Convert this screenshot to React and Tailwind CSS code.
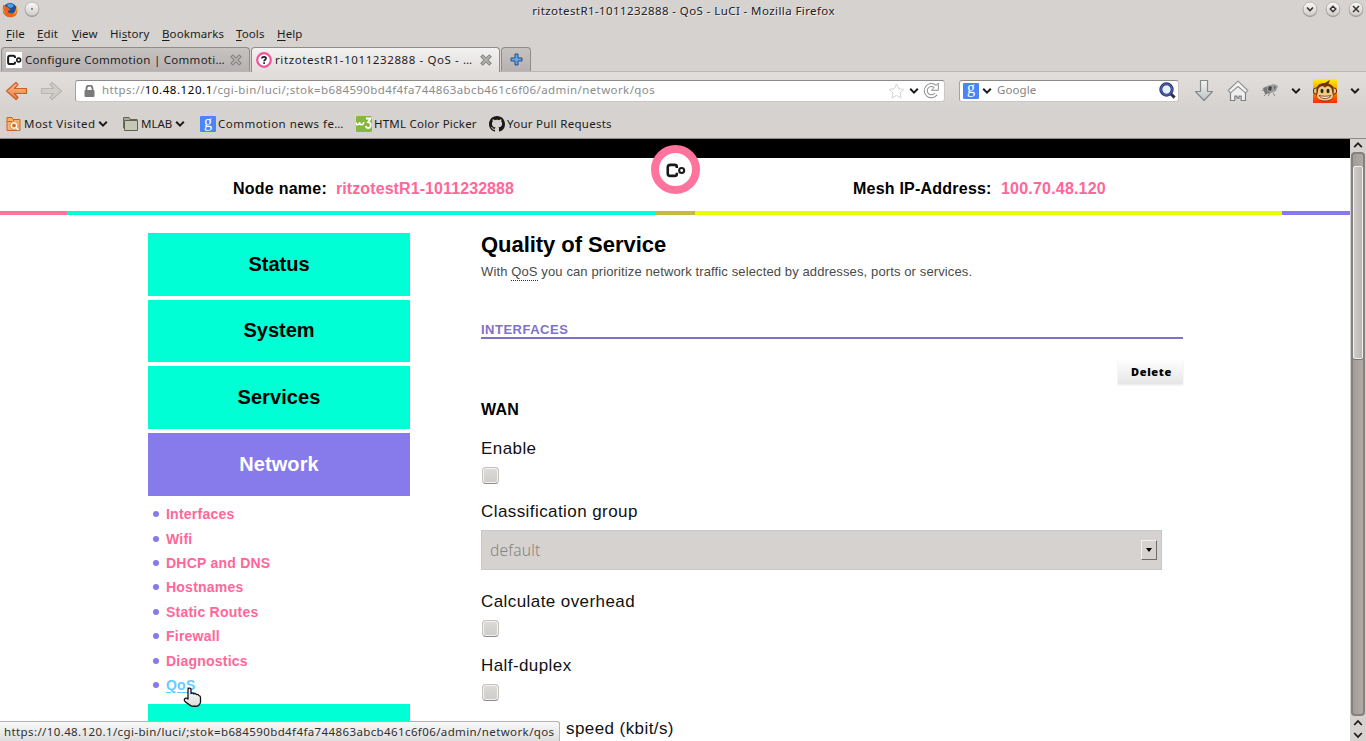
import React from "react";

const UI = "font-['Noto_Sans','Open_Sans',sans-serif]";
const HELV = "font-['Liberation_Sans',Arial,sans-serif]";

function Chevron({ className = "" }) {
  return (
    <svg className={"shrink-0 " + className} width="10" height="8" viewBox="0 0 10 8" fill="none">
      <path d="M1.2 1.8 5 5.6 8.8 1.8" stroke="#1b1b1b" strokeWidth="2" />
    </svg>
  );
}

function GoogleIcon({ className = "" }) {
  return (
    <span className={"flex h-4 w-4 shrink-0 items-center justify-center rounded-[1px] bg-[#4a84f5] " + className}>
      <span className="-mt-[5px] font-['Liberation_Serif',serif] text-[16px] leading-[18px] text-white">g</span>
    </span>
  );
}

function CommotionMark({ size, className = "" }) {
  return (
    <svg className={"shrink-0 " + className} width={size} height={size} viewBox="0 0 16 16" fill="none">
      <path d="M9 6V5.200C9 4 8.500 3.700 7.300 3.700H4C2.600 3.700 2.100 4.200 2.100 5.600v4.600c0 1.400.5 1.900 1.900 1.900h3.300c1.200 0 1.700-.3 1.700-1.500V9.800" stroke="#1a1a1a" strokeWidth="2" />
      <circle cx="12.700" cy="8" r="1.900" stroke="#1a1a1a" strokeWidth="1.600" />
    </svg>
  );
}

function WindowButton({ children }) {
  return (
    <svg className="shrink-0" width="16" height="17" viewBox="0 0 16 17" fill="none">
      <circle cx="8" cy="8.8" r="7.2" fill="#9c9894" />
      <circle cx="8" cy="8" r="6.9" fill="url(#btn)" stroke="#a9a5a1" strokeWidth=".7" />
      {children}
    </svg>
  );
}

function TitleBar() {
  return (
    <div className="flex h-[22px] shrink-0 items-center">
      <svg className="ml-[2px] mt-[-2px] shrink-0" width="16" height="16" viewBox="0 0 16 16">
        <circle cx="8" cy="8" r="7" fill="#1f4f9a" />
        <path d="M5 2.5C8 1 11 2 12 4L9 6 6 5Z" fill="#4aa3dd" />
        <path d="M1.5 2.5C.3 6 .5 10.500 3 13c3 3 8 3 10.600.5C16 11 16 6.500 14 3.500c.3 2-.1 3-.5 4C13 11 9.500 12 7.500 11 6 10.500 5.500 9 6.500 8.500l2-.5C8 6.500 6.500 6.500 5.500 5 4.500 4.500 3 4.500 1.500 2.500Z" fill="#e8661b" />
        <path d="M14 3.500c1.500 4 .5 8-2.500 9.500 2-2 3-5 2.500-9.500Z" fill="#ffd23e" />
        <path d="M1.500 5c0 3 1 5.500 3 7C1.500 11 .5 8 1.500 5Z" fill="#f8a028" />
      </svg>
      <div className="ml-[6px] mt-[-3px]">
        <WindowButton><circle cx="8" cy="8" r=".9" fill="#666" /></WindowButton>
      </div>
      <div className="flex-1" />
      <span className="mr-[467px] whitespace-nowrap text-[11.5px] tracking-[0.41px] text-[#1d2025] [text-shadow:1px_1px_0_#eee]">
        ritzotestR1-1011232888 - QoS - LuCI - Mozilla Firefox
      </span>
      <div className="mr-[2px] mt-[-3px] flex gap-[7px]">
        <WindowButton><path d="M5 6.500 8 9.500 11 6.500" stroke="#333" strokeWidth="1.600" /></WindowButton>
        <WindowButton><path d="M8 5.200 10.800 8 8 10.800 5.200 8Z" stroke="#333" strokeWidth="1.400" /></WindowButton>
        <WindowButton><path d="m5 5 6 6m0-6-6 6" stroke="#333" strokeWidth="1.500" /></WindowButton>
      </div>
    </div>
  );
}

const menus = [
  ["", "F", "ile", "w-[31px]"],
  ["", "E", "dit", "w-[35px]"],
  ["", "V", "iew", "w-[38px]"],
  ["Hi", "s", "tory", "w-[52px]"],
  ["", "B", "ookmarks", "w-[74px]"],
  ["", "T", "ools", "w-[41px]"],
  ["", "H", "elp", "w-[40px]"],
];

function MenuBar() {
  return (
    <div className="flex h-[24px] shrink-0 items-center pl-[6px] text-[11.5px] tracking-[0.1px] text-[#1c1c1c]">
      {menus.map(([a, b, c, w]) => (
        <span key={b + c} className={"shrink-0 whitespace-nowrap " + w}>
          {a}<span className="underline underline-offset-2">{b}</span>{c}
        </span>
      ))}
    </div>
  );
}

function CloseX() {
  return (
    <svg className="shrink-0" width="12" height="12" viewBox="0 0 12 12" fill="none">
      <path d="m1.500 1.500 9 9m0-9-9 9" stroke="#83817d" strokeWidth="3.800" />
      <path d="m2.200 2.200 7.600 7.600m0-7.600-7.600 7.600" stroke="#b5b3af" strokeWidth="1.700" />
    </svg>
  );
}

function Tabs() {
  return (
    <div className="flex h-[26px] shrink-0 items-end gap-px border-b border-[#bab6b3] pl-px text-[11.5px] text-[#1c1c1c]">
      <div className="flex h-[24px] w-[249px] items-center rounded-t-[4px] border border-b-0 border-[#8f8b89] bg-gradient-to-b from-[#c7c3c1] to-[#b7b2b1] pl-[4px] pr-[7px]">
        <span className="flex h-4 w-4 shrink-0 bg-white"><CommotionMark size={16} /></span>
        <span className="ml-[3px] flex-1 whitespace-nowrap tracking-[0.28px]">Configure Commotion | Commoti…</span>
        <CloseX />
      </div>
      <div className="-mb-px flex h-[25px] w-[249px] items-center rounded-t-[4px] border border-b-0 border-[#8f8b89] bg-gradient-to-b from-[#f3f2f1] to-[#e1dedc] pb-px pl-[4px] pr-[7px]">
        <svg className="shrink-0" width="16" height="16" viewBox="0 0 16 16">
          <circle cx="8" cy="8" r="6.800" fill="#fff" stroke="#f0529c" strokeWidth="2.200" />
          <path d="M6 6.400C6 4.300 10 4.300 10 6.400 10 7.800 8.100 7.700 8.100 9.300M8.100 10.300v1.700" stroke="#222" strokeWidth="1.700" fill="none" />
        </svg>
        <span className="ml-[3px] flex-1 whitespace-nowrap tracking-[0.6px]">ritzotestR1-1011232888 - QoS - …</span>
        <CloseX />
      </div>
      <div className="flex h-[24px] w-[30px] items-center justify-center rounded-t-[4px] border border-b-0 border-[#8f8b89] bg-gradient-to-b from-[#c7c3c1] to-[#b7b2b1]">
        <svg width="13" height="13" viewBox="0 0 13 13">
          <path d="M5 1h3v4h4v3H8v4H5V8H1V5h4Z" fill="#6fa3db" stroke="#1d4f96" strokeWidth="1" strokeLinejoin="round" />
        </svg>
      </div>
    </div>
  );
}

const ARROW = "M11 1.500 1.500 10 11 18.500 13 16.500 9.500 12.500H21.500V7.500H9.500L13 3.500Z";

function NavBar() {
  return (
    <div className="flex h-[37px] shrink-0 items-center bg-gradient-to-b from-[#e1dedc] to-[#d6d2cf] pl-[5px]">
      <svg className="shrink-0" width="24" height="20" viewBox="0 0 24 20">
        <path d={ARROW} fill="url(#orange)" stroke="#cc5f2c" strokeWidth="1.200" strokeLinejoin="round" />
      </svg>
      <svg className="ml-[10px] shrink-0 -scale-x-100" width="24" height="20" viewBox="0 0 24 20">
        <path d={ARROW} fill="#cfccc9" stroke="#b9b6b2" strokeWidth="1.200" strokeLinejoin="round" />
      </svg>
      <div className="ml-[12px] flex h-[22px] w-[870px] shrink-0 items-center rounded-[3px] border border-[#c9c6c3] border-t-[#8d8a88] border-l-[#a5a2a0] bg-white pl-[8px] pr-[4px]">
        <svg className="shrink-0" width="11" height="12" viewBox="0 0 11 12">
          <path d="M2.500 6V3.500a3 3 0 0 1 6 0V6" fill="none" stroke="#7a7a7a" strokeWidth="1.800" />
          <rect x=".5" y="5" width="10" height="7" rx="1" fill="#7a7a7a" />
        </svg>
        <span className="ml-[7px] -mt-px flex-1 whitespace-nowrap text-[11.5px] tracking-[0.4px] text-[#8b8b8b]">
          https://<span className="tracking-[0.55px] text-black">10.48.120.1</span>/cgi-bin/luci/;stok=b684590bd4f4fa744863abcb461c6f06/admin/network/qos
        </span>
        <svg className="shrink-0" width="17" height="16" viewBox="0 0 17 16">
          <path d="m8.500 1 2.200 4.800 5.100.6-3.800 3.500 1 5.100-4.500-2.500L4 15l1-5.100L1.200 6.400l5.100-.6Z" fill="#fff" stroke="#d4d4d4" />
        </svg>
        <Chevron className="ml-[4px]" />
        <svg className="ml-[4px] shrink-0" width="17" height="17" viewBox="0 0 17 17" fill="none">
          <path d="M13 11.800A5.600 5.600 0 1 1 12.300 4.700" stroke="#8d8d8d" strokeWidth="4" />
          <path d="M15.300 1v7.300H8.500Z" fill="#fff" stroke="#8d8d8d" />
          <path d="M13 11.800A5.600 5.600 0 1 1 12.300 4.700L14 6" stroke="#fff" strokeWidth="2" />
        </svg>
      </div>
      <div className="ml-[14px] flex h-[22px] w-[220px] shrink-0 items-center rounded-[3px] border border-[#c9c6c3] border-t-[#8d8a88] border-l-[#a5a2a0] bg-white pl-[3px] pr-[2px]">
        <GoogleIcon />
        <Chevron className="ml-[3px]" />
        <span className="ml-[5px] -mt-px flex-1 text-[11.500px] tracking-[0.1px] text-[#858585]">Google</span>
        <svg width="17" height="17" viewBox="0 0 17 17" fill="none">
          <path d="m12 12 3.600 3.600" stroke="#333" strokeWidth="3" />
          <circle cx="7.500" cy="7.500" r="5.700" fill="#e9effb" stroke="#25357f" strokeWidth="3" />
          <circle cx="7.500" cy="7.500" r="5.600" stroke="#5a75c4" strokeWidth="1" />
        </svg>
      </div>
      <svg className="ml-[15px] shrink-0" width="20" height="23" viewBox="0 0 20 23">
        <path d="M6.500 1.500h7v11h5L10 21.500 1.500 12.500h5Z" fill="url(#silver)" stroke="#85888a" strokeWidth="1.200" strokeLinejoin="round" />
      </svg>
      <svg className="ml-[13px] mt-px shrink-0" width="22" height="22" viewBox="0 0 22 22">
        <path d="M3.500 11v9.500h4.300v-4.300h2.200v2h2v-2h2.200v4.300h4.300V11L11 5Z" fill="#efefee" stroke="#7f8284" strokeWidth="1.200" strokeLinejoin="round" />
        <path d="M11 1.200 1.200 10.500l2.300 2.300L11 6.500l7.500 6.300 2.300-2.300Z" fill="#f4f4f3" stroke="#8d9092" strokeWidth="1.100" strokeLinejoin="round" />
      </svg>
      <svg className="ml-[12px] shrink-0" width="18" height="15" viewBox="0 0 18 15">
        <path d="M1 7 5 8M3 13l4-4M7 13l2-3M12 10l2 3" stroke="#8a8a8a" strokeWidth="1" />
        <path d="M2 5 7 3l3 2-1 5-5 1Z" fill="#777" />
        <path d="M6 3 13 1l4 2-2 5-5 2-4-2Z" fill="#9c9c9c" />
        <path d="m8 3 3 1-1 4-3-1Z" fill="#444" />
        <path d="m13 3 2 1-2 3Z" fill="#666" />
      </svg>
      <Chevron className="ml-[12px]" />
      <svg className="ml-[12px] shrink-0" width="24" height="24" viewBox="0 0 24 24">
        <path d="M0 0h24v24H0Z" fill="url(#fire)" />
        <circle cx="3.500" cy="12" r="3.200" fill="#f2c078" stroke="#5d2c08" />
        <circle cx="20.500" cy="12" r="3.200" fill="#f2c078" stroke="#5d2c08" />
        <path d="M3.500 13C2.500 6 7 4 12 4L17 .8l-1.500 4C20 6 21.500 9 20.500 14c1 5-3 8.500-8.500 8.500S2.500 19 3.500 13Z" fill="#6d3509" />
        <path d="M5 12c0-5 6-6 7-3 1-3 7-2 7 3 0 2 1 3 1 5 0 3-4 4.500-8 4.500S4 20 4 17c0-2 1-3 1-5Z" fill="#f6ca84" />
        <ellipse cx="9" cy="12" rx="1.500" ry="2.300" fill="#173314" />
        <ellipse cx="15" cy="12" rx="1.500" ry="2.300" fill="#173314" />
        <path d="M6 16.500c2 4 10 4 12 0-4 1-8 1-12 0Z" fill="#fff" stroke="#6d2508" strokeWidth=".8" />
      </svg>
      <Chevron className="ml-[13px]" />
    </div>
  );
}

function Bookmarks() {
  return (
    <div className="flex h-[29px] shrink-0 items-center pl-[6px] pt-px text-[11.5px] text-[#1c1c1c]">
      <svg className="shrink-0" width="15" height="16" viewBox="0 0 15 16" fill="none">
        <path d="M1 14.500V1.500h5l1 2h7v11Z" fill="#f5b470" stroke="#cf6414" />
        <path d="M1 5.500h6l1-2" stroke="#cf6414" />
        <circle cx="8" cy="9.500" r="3.200" stroke="#fff" strokeWidth="2" />
        <circle cx="8" cy="9.500" r="4" stroke="#cf6414" strokeWidth=".7" />
        <circle cx="8" cy="9.500" r="1.600" fill="#cf6414" />
        <path d="m10.500 12 2 2" stroke="#fff" strokeWidth="1.600" />
      </svg>
      <span className="ml-[3px] w-[74px] whitespace-nowrap tracking-[0.45px]">Most Visited</span>
      <Chevron />
      <svg className="ml-[15px] shrink-0" width="16" height="16" viewBox="0 0 16 16">
        <path d="M.6 12V1.500h5.500l1 2h7V12Z" fill="#a9ab97" stroke="#5f6153" />
        <path d="M1.500 14.500V4.500h13v10Z" fill="#c6c8b6" stroke="#5f6153" />
      </svg>
      <span className="ml-[2px] w-[34px] whitespace-nowrap">MLAB</span>
      <Chevron />
      <GoogleIcon className="ml-[15px]" />
      <span className="ml-[2px] w-[127px] whitespace-nowrap tracking-[0.48px]">Commotion news fe…</span>
      <svg className="ml-[11px] shrink-0" width="16" height="16" viewBox="0 0 16 16" fill="none">
        <rect width="16" height="16" rx="1.500" fill="#86b840" />
        <path d="M0 6.500c.5 3 3 3 3.500 0 .5 3 3.500 3 4.500-.5" stroke="#fff" strokeWidth="1.600" />
        <path d="M10 2.500h4.500l-2.300 3.700c3.300 0 3.300 5.800.3 5.800-1.500 0-2.500-.8-2.800-2" stroke="#fff" strokeWidth="1.800" />
      </svg>
      <span className="ml-[2px] w-[104px] whitespace-nowrap tracking-[0.22px]">HTML Color Picker</span>
      <svg className="ml-[11px] shrink-0" width="16" height="16" viewBox="0 0 16 16">
        <path fill="#191717" d="M8 0C3.580 0 0 3.580 0 8c0 3.540 2.290 6.530 5.470 7.590.4.070.55-.17.55-.38 0-.19-.01-.82-.01-1.490-2.010.37-2.530-.49-2.690-.94-.09-.23-.48-.94-.82-1.130-.28-.15-.68-.52-.01-.53.63-.01 1.080.58 1.230.82.72 1.210 1.870.87 2.330.66.07-.52.28-.87.51-1.070-1.780-.2-3.640-.89-3.640-3.950 0-.87.31-1.590.82-2.150-.08-.2-.36-1.020.08-2.120 0 0 .67-.21 2.200.82.64-.18 1.320-.27 2-.27s1.360.09 2 .27c1.530-1.040 2.200-.82 2.200-.82.44 1.100.16 1.920.08 2.120.51.56.82 1.270.82 2.150 0 3.070-1.870 3.750-3.650 3.950.29.25.54.73.54 1.480 0 1.070-.01 1.930-.01 2.200 0 .21.15.46.55.38A8.010 8.010 0 0 0 16 8c0-4.420-3.580-8-8-8Z" />
      </svg>
      <span className="ml-[2px] whitespace-nowrap tracking-[0.26px]">Your Pull Requests</span>
    </div>
  );
}

function Header() {
  return (
    <div className="relative shrink-0">
      <div className="h-[19px] bg-black" />
      <div className="flex h-[53px] items-center pt-[8px] text-[16px] font-bold leading-5">
        <span className="ml-[233px] w-[103px] whitespace-nowrap tracking-[0.25px] text-black">Node name:</span>
        <span className="w-[517px] whitespace-nowrap tracking-[0.09px] text-[#ff6699]">ritzotestR1-1011232888</span>
        <span className="w-[148px] whitespace-nowrap tracking-[0.22px] text-black">Mesh IP-Address:</span>
        <span className="whitespace-nowrap tracking-[0.2px] text-[#ff6699]">100.70.48.120</span>
      </div>
      <div className="flex h-[4px]">
        <div className="w-[67px] bg-[#ff739d]" />
        <div className="w-[588px] bg-[#00ffd5]" />
        <div className="w-[40px] bg-[#c9b93b]" />
        <div className="w-[587px] bg-[#eaff00]" />
        <div className="flex-1 bg-[#877aeb]" />
      </div>
      <div className="absolute left-[651px] top-[6px] flex h-[49px] w-[49px] items-center justify-center rounded-full border-8 border-[#ff739d] bg-white">
        <CommotionMark size={21} className="mt-[2px]" />
      </div>
    </div>
  );
}

const sub = ["Interfaces", "Wifi", "DHCP and DNS", "Hostnames", "Static Routes", "Firewall", "Diagnostics", "QoS"];

const sections = [
  ["Status", "bg-[#00ffd5] text-black"],
  ["System", "bg-[#00ffd5] pb-[2px] text-black"],
  ["Services", "bg-[#00ffd5] pb-[2px] text-black tracking-[0.1px]"],
  ["Network", "bg-[#877aeb] text-white tracking-[0.1px]"],
];

function Sidebar() {
  return (
    <div className="ml-[148px] w-[262px] shrink-0 pt-[18px]">
      <div className="flex flex-col gap-[4px] text-[20px] font-bold">
        {sections.map(([t, style]) => (
          <div key={t} className={"flex h-[62.67px] items-center justify-center " + style}>
            {t}
          </div>
        ))}
      </div>
      <ul className="h-[208.300px] pt-[6.300px]">
        {sub.map((t) => (
          <li key={t} className="flex h-[24.430px] items-center pl-[5px]">
            <span className="h-[6px] w-[6px] rounded-full bg-[#877aeb]" />
            <span className={"ml-[7px] text-[14px] font-bold leading-4 tracking-[0.23px] " + (t === "QoS" ? "text-[#66ccff] underline underline-offset-2" : "text-[#ff6699]")}>{t}</span>
          </li>
        ))}
      </ul>
      <div className="h-[62px] bg-[#00ffd5]" />
    </div>
  );
}

function Check() {
  return (
    <div className="ml-px h-[17px] w-[17px] rounded-[4px] border border-[#c4c1be] border-b-[#8e8b88] bg-gradient-to-b from-[#dddbd9] to-[#cfccc8] shadow-[inset_0_0_0_1px_#f4f3f2]" />
  );
}

function Label({ children, className = "" }) {
  return <div className={"whitespace-nowrap text-[17px] leading-5 tracking-[0.42px] text-[#111] " + className}>{children}</div>;
}

function Main() {
  return (
    <div className="ml-[71px] flex w-[702px] shrink-0 flex-col pt-[16px]">
      <h1 className="h-[26px] whitespace-nowrap text-[22px] font-bold leading-[27px] tracking-[-0.04px] text-black">Quality of Service</h1>
      <p className="mt-[6px] h-[18px] whitespace-nowrap text-[13px] leading-[18px] tracking-[0.12px] text-[#4a4a4a]">
        With <span className="inline-block h-[18px] border-b border-dotted border-[#333] leading-[18px]">QoS</span> you can prioritize network traffic selected by addresses, ports or services.
      </p>
      <h2 className="mt-[39px] h-[19px] border-b-2 border-[#7f72c9] text-[13px] font-bold leading-[19px] tracking-[0.5px] text-[#7f72c9]">INTERFACES</h2>
      <button className={"mt-[20px] h-[25px] w-[65px] self-end bg-gradient-to-b from-white to-[#e6e6e6] pl-[2px] pt-[2px] text-[11px] font-black tracking-[0.65px] text-black shadow-[0_1px_2px_rgba(0,0,0,0.1)] " + UI}>
        Delete
      </button>
      <h3 className="mt-[16px] text-[16px] font-bold leading-5 tracking-[0.2px] text-black">WAN</h3>
      <Label className="mt-[19px]">Enable</Label>
      <div className="mt-[8px]"><Check /></div>
      <Label className="mt-[18px]">Classification group</Label>
      <div className="mt-[8px] flex h-[40px] w-[681px] items-center justify-between border border-[#c8c8c8] bg-[#d6d2cf] pl-[8px] pr-[4px]">
        <span className={"pt-[2px] text-[15.500px] font-light tracking-[0.2px] text-[#868482] " + UI}>default</span>
        <span className="flex h-5 w-4 items-center justify-center border border-[#6f6c6a] border-l-[#f2f1f0] border-t-[#f2f1f0]">
          <span className="h-0 w-0 border-x-[3px] border-t-[4px] border-x-transparent border-t-black" />
        </span>
      </div>
      <Label className="mt-[22px]">Calculate overhead</Label>
      <div className="mt-[8px]"><Check /></div>
      <Label className="mt-[19px]">Half-duplex</Label>
      <div className="mt-[8px]"><Check /></div>
      <Label className="mt-[18px] pl-[85px]">speed (kbit/s)</Label>
    </div>
  );
}

function Scrollbar() {
  return (
    <div className="flex w-[16px] shrink-0 flex-col items-center bg-[#d6d2cf]">
      <svg className="mt-[2px] shrink-0" width="10" height="8" viewBox="0 0 10 8" fill="none">
        <path d="M1.200 6.200 5 2.200 8.800 6.200" stroke="#1b1b1b" strokeWidth="1.800" />
      </svg>
      <div className="mt-[3px] w-[14px] flex-1 rounded-[4px] border-2 border-[#85817e] bg-gradient-to-r from-[#a29d9a] to-[#b3a9a5] pt-[12px]">
        <div className="h-[193px] w-[10px] rounded-[2px] border border-[#f0efee] bg-gradient-to-r from-[#cfccc9] to-[#b9b6b3] shadow-[0_1px_0_#77736f]" />
      </div>
      <svg className="mb-[2px] mt-[3px] shrink-0" width="10" height="20" viewBox="0 0 10 20" fill="none">
        <path d="M1.200 6 5 2 8.800 6M1.200 14 5 18 8.800 14" stroke="#1b1b1b" strokeWidth="1.800" />
      </svg>
    </div>
  );
}

function Defs() {
  return (
    <svg className="absolute h-0 w-0">
      <defs>
        <linearGradient id="btn" x1="0" y1="0" x2="0" y2="1"><stop offset="0" stopColor="#fafafa" /><stop offset="1" stopColor="#cfccc9" /></linearGradient>
        <linearGradient id="orange" x1="0" y1="0" x2="0" y2="1"><stop offset="0" stopColor="#fcc08a" /><stop offset="1" stopColor="#ef7a3a" /></linearGradient>
        <linearGradient id="silver" x1="0" y1="0" x2="0" y2="1"><stop offset="0" stopColor="#f3f4f4" /><stop offset="1" stopColor="#bcc2c5" /></linearGradient>
        <linearGradient id="fire" x1="0" y1="0" x2="0" y2="1"><stop offset="0" stopColor="#fff200" /><stop offset="1" stopColor="#ff2a00" /></linearGradient>
        <linearGradient id="hand" x1="0" y1="0" x2="0" y2="1"><stop offset="0" stopColor="#ffffff" /><stop offset="1" stopColor="#dcdcdc" /></linearGradient>
      </defs>
    </svg>
  );
}

export default function App() {
  return (
    <div className={"relative flex h-[741px] w-[1366px] flex-col overflow-hidden bg-[#d6d2cf] " + UI}>
      <Defs />
      <TitleBar />
      <MenuBar />
      <Tabs />
      <NavBar />
      <Bookmarks />
      <div className="mt-auto h-px shrink-0 bg-[#8d8a87]" />
      <div className="flex h-[602px] shrink-0">
        <div className={"h-full w-[1350px] overflow-hidden bg-white " + HELV}>
          <Header />
          <div className="flex">
            <Sidebar />
            <Main />
          </div>
        </div>
        <Scrollbar />
      </div>
      <div className="absolute bottom-0 left-0 flex h-[20px] w-[560px] items-center rounded-tr-[3px] border-r border-t border-[#b5b3b1] bg-gradient-to-b from-[#f9f9f9] to-[#dedede] pl-[4px] text-[11.500px] text-[#2f2f2f]">
        <span className="whitespace-nowrap tracking-[0.39px]">https://10.48.120.1/cgi-bin/luci/;stok=b684590bd4f4fa744863abcb461c6f06/admin/network/qos</span>
      </div>
      <svg className="absolute left-[183px] top-[687px]" width="19" height="21" viewBox="0 0 19 21">
        <path d="M5 11V2.500C5 .6 8 .6 8 2.500V6.500c1-.6 2.300-.4 2.700.4 1-.5 2.300-.2 2.700.7 1-.3 2.200.1 2.500 1 1 .1 1.600.8 1.600 1.800v4.500c0 1.800-1.300 2.600-2 3.600-.8 1-7 1-8 0C6 17.300 1.300 15 1.300 13 1.200 11.300 3 10.500 5 12Z" fill="url(#hand)" stroke="#111" strokeWidth="1.300" strokeLinejoin="round" />
      </svg>
    </div>
  );
}
